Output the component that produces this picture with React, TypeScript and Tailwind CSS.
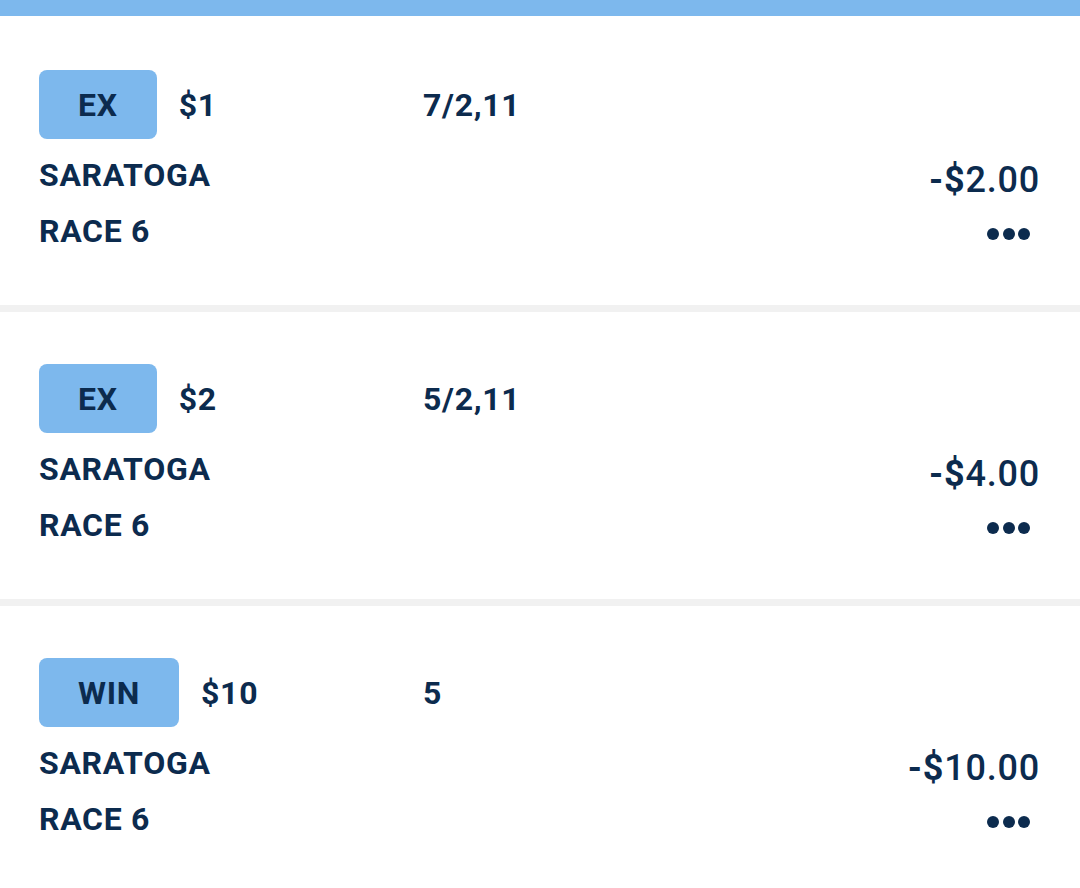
import React from 'react';

type Bet = {
  type: string;
  stake: string;
  picks: string;
  track: string;
  race: string;
  amount: string;
};

const BETS: Bet[] = [
  { type: 'EX', stake: '$1', picks: '7/2,11', track: 'SARATOGA', race: 'RACE 6', amount: '2.00' },
  { type: 'EX', stake: '$2', picks: '5/2,11', track: 'SARATOGA', race: 'RACE 6', amount: '4.00' },
  { type: 'WIN', stake: '$10', picks: '5', track: 'SARATOGA', race: 'RACE 6', amount: '10.00' },
];

const MoreDots = () => (
  <div className="mr-[10px] mt-[20px] flex h-[12px] items-center gap-[3.5px]">
    <span className="h-[12px] w-[12px] rounded-full bg-[#0c2b4e]" />
    <span className="h-[12px] w-[12px] rounded-full bg-[#0c2b4e]" />
    <span className="h-[12px] w-[12px] rounded-full bg-[#0c2b4e]" />
  </div>
);

const BetCard = ({ bet, first }: { bet: Bet; first?: boolean }) => {
  return (
    <div className={`bg-white pl-[39px] pr-[40px] pb-[46px] ${first ? 'pt-[54px]' : 'pt-[52px]'}`}>
      {/* 베팅 타입 / 금액 / 선택 */}
      <div className="flex items-center text-[32px] font-bold tracking-[0.7px]">
        <div className="flex w-[384px] items-center gap-[22px]">
          <div className="flex h-[69px] items-center rounded-[8px] bg-[#7db8ed] px-[39px]">
            {bet.type}
          </div>
          <span>{bet.stake}</span>
        </div>
        <span>{bet.picks}</span>
      </div>

      <div className="mt-[8px] flex justify-between">
        {/* 트랙 / 레이스 */}
        <div className="flex flex-col text-[32px] font-bold tracking-[0.7px]">
          <span className="leading-[56px]">{bet.track}</span>
          <span className="leading-[56px]">{bet.race}</span>
        </div>

        {/* 금액 / 더보기 */}
        <div className="flex flex-col items-end pt-[5px]">
          <span className="text-[36px] leading-[56px] tracking-[0.8px]">
            <span className="font-bold">-$</span>
            <span className="font-medium">{bet.amount}</span>
          </span>
          <MoreDots />
        </div>
      </div>
    </div>
  );
};

const App = () => {
  return (
    <div
      className="min-h-[888px] w-full bg-white text-[#0c2b4e]"
      style={{ fontFamily: 'Roboto, "Liberation Sans", sans-serif' }}
    >
      <div className="h-[16px] bg-[#7db8ed]" />
      <div className="flex flex-col gap-[7px] bg-[#f1f1f1]">
        {BETS.map((bet, idx) => (
          <BetCard key={idx} bet={bet} first={idx === 0} />
        ))}
      </div>
    </div>
  );
};

export default App;
